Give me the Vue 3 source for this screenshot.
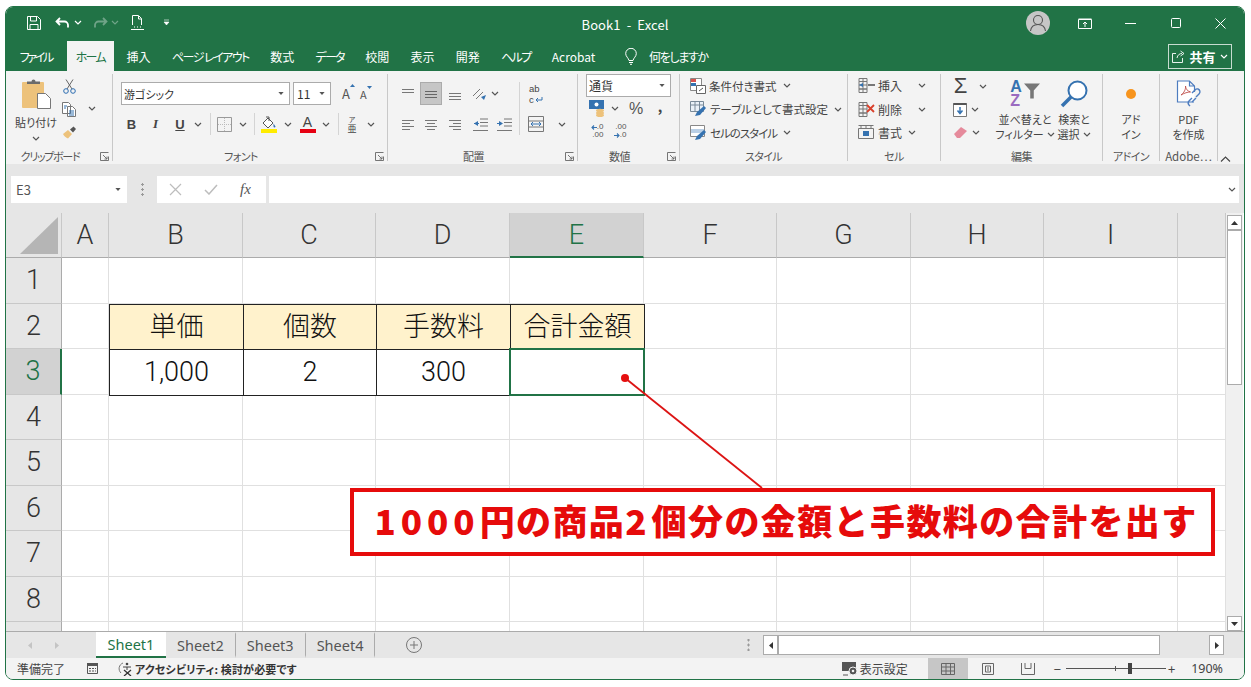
<template>
  <div class="window">
    <!-- shared small glyphs -->
    <svg class="defs" width="0" height="0">
      <symbol id="chev" viewBox="0 0 8 5"><path d="M1 1l3 3 3-3" fill="none" stroke="currentColor" stroke-width="1.2" /></symbol>
      <symbol id="launch" viewBox="0 0 9 9"><path d="M.5 8.500v-8h8M.5 8.500h8v-4M3 3l4 4M7 4.500V7H4.500" fill="none" stroke="#666" stroke-width=".9" /></symbol>
      <symbol id="tri" viewBox="0 0 7 4"><path d="M0 0h7L3.500 4z" fill="currentColor" /></symbol>
    </svg>

    <header class="titlebar">
      <div class="qat">
        <svg class="q1" width="14" height="14" viewBox="0 0 14 14"><path d="M.5.500h10l3 3v10H.5zM3.500 1v4h6V1M3 13.500V8.500h8v5" fill="none" stroke="#fff" /></svg>
        <svg class="q2" width="15" height="12" viewBox="0 0 15 12"><path d="M5 1L1.500 4.500 5 8M2 4.500h7.500a3.500 3.500 0 0 1 3.500 3.500v2.500" fill="none" stroke="#fff" stroke-width="1.800" /></svg>
        <svg class="chev-w" width="8" height="5"><use href="#chev" /></svg>
        <svg class="q3" width="15" height="12" viewBox="0 0 15 12"><path d="M10 1l3.500 3.500L10 8M13 4.500H5.500A3.500 3.500 0 0 0 2 8v2.500" fill="none" stroke="#6fa387" stroke-width="1.800" /></svg>
        <svg class="chev-d" width="8" height="5"><use href="#chev" /></svg>
        <svg class="q4" width="13" height="15" viewBox="0 0 13 15"><path d="M1.500 10V.5h6l3 3V10M7.500 1v3h3M0 14.500h13M3 12h1M6 12h1M9 12h1" fill="none" stroke="#fff" /></svg>
        <svg class="q5" width="7" height="7" viewBox="0 0 7 7"><path d="M1 1h5M1 3h5l-2.500 3z" fill="#fff" stroke="#fff" stroke-width=".6" /></svg>
      </div>
      <div class="doc-title">Book1&nbsp; -&nbsp; Excel</div>
      <div class="win-ctl">
        <svg class="avatar" width="24" height="24" viewBox="0 0 24 24"><circle cx="12" cy="12" r="12" fill="#c6c6c6" /><circle cx="12" cy="9" r="4.500" fill="none" stroke="#555" stroke-width="1.100" /><path d="M4.500 20c.5-4 3.500-6.500 7.500-6.500s7 2.500 7.500 6.500" fill="none" stroke="#555" stroke-width="1.100" /></svg>
        <span class="ctl first"><svg width="14" height="11" viewBox="0 0 14 11"><path d="M.5 1.500h13v9H.5zM.5 1h13M7 9V4M5 6l2-2 2 2" fill="none" stroke="#fff" /></svg></span>
        <span class="ctl"><svg width="11" height="1"><path d="M0 .5h11" stroke="#fff" /></svg></span>
        <span class="ctl"><svg width="10" height="10"><rect x=".5" y=".5" width="9" height="9" rx="1" fill="none" stroke="#fff" /></svg></span>
        <span class="ctl"><svg width="11" height="11"><path d="M.5.500l10 10M10.500.5l-10 10" stroke="#fff" /></svg></span>
      </div>
    </header>

    <nav class="tabs">
      <span
        v-for="t in tabs"
        :key="t"
        class="tab"
        :class="{ active: t === 'ホーム', kana: isKana(t) }"
      >{{ t }}</span>
      <svg class="bulb" width="12" height="17" viewBox="0 0 12 17"><path d="M4 12.500C3.500 10 .7 8.500.7 5.600a5.300 5.300 0 0 1 10.600 0c0 2.900-2.800 4.400-3.300 6.900zM4 14.500h4M5 16.300h2" fill="none" stroke="#fff" /></svg>
      <span class="tell">何をしますか</span>
      <span class="share">
        <svg width="13" height="13" viewBox="0 0 13 13"><path d="M4 3.500H.5v9h10V8M5 8c.5-3 2.500-4.500 5-4.500M8.500 1L12 3.500 8.500 6" fill="none" stroke="#fff" stroke-width=".9" /></svg>
        <b>共有</b>
        <svg class="chev-w" width="8" height="5"><use href="#chev" /></svg>
      </span>
    </nav>

    <section class="ribbon">
      <!-- クリップボード -->
      <div class="group g-clip">
        <div class="body">
          <div class="paste">
            <svg width="29" height="30" viewBox="0 0 29 30">
              <rect x="0" y="3" width="22" height="26" rx="1" fill="#edc27b" />
              <path d="M5 5V2.500h4.500a2 2 0 0 1 4 0H18V5z" fill="#6b6b6b" />
              <path d="M15.500 14.500h8l5 5v10h-13z" fill="#fff" stroke="#777" />
            </svg>
            <span class="stack-txt">貼り付け</span>
            <svg class="chev" width="8" height="5"><use href="#chev" /></svg>
          </div>
          <div class="clip-tools">
            <svg width="13" height="15" viewBox="0 0 13 15"><path d="M3 .500l6 9.500M10 .5L4 10" stroke="#666" fill="none" /><circle cx="3" cy="12" r="2.300" fill="none" stroke="#2b6cb0" /><circle cx="10" cy="12" r="2.300" fill="none" stroke="#2b6cb0" /></svg>
            <svg width="14" height="15" viewBox="0 0 14 15"><path d="M.5.500h6l2 2v9h-8zM5.500 4.500h5l3 3v7h-8z" fill="#fff" stroke="#777" /><path d="M7 9h5M7 11h5M7 13h5M2 4h3M2 6h2" stroke="#3572b0" /></svg>
            <svg width="15" height="14" viewBox="0 0 15 14"><path d="M1 9l5-4 4 4-4 4.500C4 13 2 11 1 9z" fill="#edc27b" /><path d="M8 4.500l3.500-3 2.500 2.500-3 3.500z" fill="#555" /></svg>
          </div>
          <svg class="chev clip-chev" width="8" height="5"><use href="#chev" /></svg>
        </div>
        <div class="foot"><i /><span>クリップボード</span><svg width="9" height="9"><use href="#launch" /></svg></div>
      </div>

      <!-- フォント -->
      <div class="group g-font">
        <div class="body col">
          <div class="font-row1">
            <div class="combo c-font"><span>游ゴシック</span><svg width="6" height="3"><use href="#tri" /></svg></div>
            <div class="combo c-size"><span>11</span><svg width="6" height="3"><use href="#tri" /></svg></div>
            <span class="grow-a">A<svg width="5" height="3" viewBox="0 0 5 3"><path d="M0 3l2.500-3L5 3z" fill="#3572b0" /></svg></span>
            <span class="grow-a small">A<svg width="5" height="3" viewBox="0 0 5 3"><path d="M0 0l2.500 3L5 0z" fill="#3572b0" /></svg></span>
          </div>
          <div class="font-row2">
            <b class="fmt">B</b>
            <i class="fmt ital">I</i>
            <u class="fmt und">U</u>
            <svg class="chev" width="8" height="5"><use href="#chev" /></svg>
            <span class="sep" />
            <svg width="15" height="15" viewBox="0 0 15 15"><path d="M.5.500h14v14H.5z" fill="none" stroke="#999" /><path d="M7.500 1v13M1 7.500h13" stroke="#bbb" stroke-dasharray="1 1" /></svg>
            <svg class="chev" width="8" height="5"><use href="#chev" /></svg>
            <span class="sep" />
            <svg width="16" height="18" viewBox="0 0 16 18"><path d="M2 8l5-5 5 5-5 5z" fill="#fff" stroke="#555" /><path d="M5 2h3v4" fill="none" stroke="#555" /><path d="M12.500 8.500l2 3a1 1 0 1 1-2 0z" fill="#3572b0" /><rect y="14" width="16" height="4" fill="#ffec00" /></svg>
            <svg class="chev" width="8" height="5"><use href="#chev" /></svg>
            <span class="color-a">A</span>
            <svg class="chev" width="8" height="5"><use href="#chev" /></svg>
            <span class="sep" />
            <span class="phon"><small>ア</small><span>亜</span></span>
            <svg class="chev" width="8" height="5"><use href="#chev" /></svg>
          </div>
        </div>
        <div class="foot"><i /><span>フォント</span><svg width="9" height="9"><use href="#launch" /></svg></div>
      </div>

      <!-- 配置 -->
      <div class="group g-align">
        <div class="body">
          <div class="al-left">
            <div class="al-row1">
              <svg width="14" height="12" viewBox="0 0 14 12"><path d="M1 1.500h12M1 4.500h12" stroke="#777" /></svg>
              <span class="pressed"><svg width="14" height="12" viewBox="0 0 14 12"><path d="M1 3.500h12M1 6.500h12M1 9.500h12" stroke="#666" /></svg></span>
              <svg width="14" height="12" viewBox="0 0 14 12"><path d="M1 5.500h12M1 8.500h12M1 11.500h12" stroke="#777" /></svg>
              <svg width="15" height="16" viewBox="0 0 15 16"><path d="M1 10l7-7M4 13l7-7" stroke="#777" fill="none" /><path d="M9 11l5-2-2 5z" fill="#3572b0" /></svg>
              <svg class="chev" width="8" height="5"><use href="#chev" /></svg>
            </div>
            <div class="al-row2">
              <svg width="14" height="11" viewBox="0 0 14 11"><path d="M1 1.500h12M1 4.500h8M1 7.500h12M1 10.500h8" stroke="#777" /></svg>
              <svg width="14" height="11" viewBox="0 0 14 11"><path d="M1 1.500h12M3 4.500h8M1 7.500h12M3 10.500h8" stroke="#777" /></svg>
              <svg width="14" height="11" viewBox="0 0 14 11"><path d="M1 1.500h12M5 4.500h8M1 7.500h12M5 10.500h8" stroke="#777" /></svg>
              <svg width="15" height="13" viewBox="0 0 15 13"><path d="M7 1h8M7 4.500h8M7 8h8M0 12.500h15" stroke="#777" /><path d="M5 3L1 5.500 5 8z" fill="#3572b0" /><path d="M1 5.500h5" stroke="#3572b0" /></svg>
              <svg width="15" height="13" viewBox="0 0 15 13"><path d="M7 1h8M7 4.500h8M7 8h8M0 12.500h15" stroke="#777" /><path d="M2 3l4 2.500L2 8z" fill="#3572b0" /><path d="M0 5.500h3" stroke="#3572b0" /></svg>
            </div>
          </div>
          <div class="al-right">
            <div class="wrap-ab"><span>ab</span><span class="wrap-c">c<svg width="8" height="6" viewBox="0 0 8 6"><path d="M7 0v3H1M3 1L1 3l2 2" fill="none" stroke="#3572b0" /></svg></span></div>
            <div class="merge">
              <svg width="16" height="16" viewBox="0 0 16 16"><path d="M.5.500h15v15H.5zM.5 5h15M.5 11h15" fill="none" stroke="#777" /><path d="M3 8h10M5 6L3 8l2 2M11 6l2 2-2 2" fill="none" stroke="#3572b0" /></svg>
              <svg class="chev" width="8" height="5"><use href="#chev" /></svg>
            </div>
          </div>
        </div>
        <div class="foot"><i /><span>配置</span><svg width="9" height="9"><use href="#launch" /></svg></div>
      </div>

      <!-- 数値 -->
      <div class="group g-num">
        <div class="body col">
          <div class="combo c-num"><span>通貨</span><svg width="6" height="3"><use href="#tri" /></svg></div>
          <div class="num-row">
            <svg width="17" height="17" viewBox="0 0 17 17"><rect width="15" height="9" fill="#3572b0" /><circle cx="7.500" cy="4.500" r="2" fill="#fff" /><ellipse cx="11" cy="10.500" rx="4" ry="1.800" fill="#edc27b" /><ellipse cx="11" cy="13" rx="4" ry="1.800" fill="#edc27b" /><ellipse cx="11" cy="15.200" rx="4" ry="1.800" fill="#edc27b" /></svg>
            <svg class="chev" width="8" height="5"><use href="#chev" /></svg>
            <span class="pct">%</span>
            <b class="comma">,</b>
          </div>
          <div class="num-row3">
            <span class="dec">
              <span class="dec-line"><svg width="6" height="5" viewBox="0 0 6 5"><path d="M6 2.500H1M3 .5l-2 2 2 2" fill="none" stroke="#3572b0" stroke-width="1.100" /></svg>.0</span>
              <span class="dec-line">.00</span>
            </span>
            <span class="dec">
              <span class="dec-line">.00</span>
              <span class="dec-line"><svg width="6" height="5" viewBox="0 0 6 5"><path d="M0 2.500h5M3 .5l2 2-2 2" fill="none" stroke="#3572b0" stroke-width="1.100" /></svg>.0</span>
            </span>
          </div>
        </div>
        <div class="foot"><i /><span>数値</span><svg width="9" height="9"><use href="#launch" /></svg></div>
      </div>

      <!-- スタイル -->
      <div class="group g-style">
        <div class="body col">
          <div class="list-row">
            <svg width="16" height="16" viewBox="0 0 16 16"><path d="M.5.500h11v12H.5z" fill="#fff" stroke="#888" /><path d="M1 1h5v3H1z" fill="#d9534f" /><path d="M1 5h5v3H1z" fill="#3572b0" /><path d="M6.500 7.500h9v8h-9z" fill="#fff" stroke="#666" /><path d="M9 13l4-3" stroke="#555" /></svg>
            <span>条件付き書式</span><svg class="chev" width="8" height="5"><use href="#chev" /></svg>
          </div>
          <div class="list-row">
            <svg width="17" height="16" viewBox="0 0 17 16"><path d="M.5.500h13v10H.5zM.5 4h13M5 .500v10M9.500.5v10" fill="#eaf1f8" stroke="#7a8a99" /><path d="M5 15l2-4 7-6 2 2-6 7z" fill="#3572b0" /></svg>
            <span>テーブルとして書式設定</span><svg class="chev" width="8" height="5"><use href="#chev" /></svg>
          </div>
          <div class="list-row">
            <svg width="17" height="16" viewBox="0 0 17 16"><path d="M.5.500h14v11H.5z" fill="#fff" stroke="#888" /><path d="M1 4h13v4H1z" fill="#b9cfe6" /><path d="M5 15l2-4 7-6 2 2-6 7z" fill="#3572b0" /></svg>
            <span class="tight">セルのスタイル</span><svg class="chev" width="8" height="5"><use href="#chev" /></svg>
          </div>
        </div>
        <div class="foot center"><span>スタイル</span></div>
      </div>

      <!-- セル -->
      <div class="group g-cell">
        <div class="body col">
          <div class="list-row">
            <svg width="17" height="15" viewBox="0 0 17 15"><path d="M1 .500h8v3H1zM1 11h8v3.500H1zM1 3.500v7.500h8V3.500M5 .5v14M1 7h8" fill="none" stroke="#777" /><path d="M10 7h7" stroke="#777" stroke-width="2" /><path d="M5 5L1 7l4 2z" fill="#3572b0" /></svg>
            <span>挿入</span><svg class="chev far" width="8" height="5"><use href="#chev" /></svg>
          </div>
          <div class="list-row">
            <svg width="17" height="15" viewBox="0 0 17 15"><path d="M1 .500h8v3H1zM1 11h8v3.500H1zM1 3.500v7.500h8V3.500M5 .5v14M1 7h8" fill="none" stroke="#777" /><path d="M9 3l7 7M16 3l-7 7" stroke="#d9402b" stroke-width="1.800" /></svg>
            <span>削除</span><svg class="chev far" width="8" height="5"><use href="#chev" /></svg>
          </div>
          <div class="list-row">
            <svg width="17" height="16" viewBox="0 0 17 16"><path d="M.5.500h15M.5 3.500h15v10H.5z" fill="none" stroke="#777" /><rect x="5" y="6" width="6" height="5" fill="#3572b0" /><path d="M3 .5v3M8 .5v3M13 .5v3" stroke="#777" /></svg>
            <span>書式</span><svg class="chev" width="8" height="5"><use href="#chev" /></svg>
          </div>
        </div>
        <div class="foot center"><span>セル</span></div>
      </div>

      <!-- 編集 -->
      <div class="group g-edit">
        <div class="body">
          <div class="edit-left">
            <div class="edit-row"><span class="sigma">Σ</span><svg class="chev" width="8" height="5"><use href="#chev" /></svg></div>
            <div class="edit-row short">
              <svg width="14" height="14" viewBox="0 0 14 14"><path d="M.5.500h13v13H.5z" fill="#fff" stroke="#777" /><path d="M.5 1h13" stroke="#555" stroke-width="2" /><path d="M7 4v6M4.500 7.500L7 10.500l2.500-3" fill="none" stroke="#3572b0" stroke-width="1.500" /></svg>
              <svg class="chev" width="8" height="5"><use href="#chev" /></svg>
            </div>
            <div class="edit-row short">
              <svg width="15" height="13" viewBox="0 0 15 13"><path d="M1 8l7-7 6 4-7 7H4z" fill="#e58a9b" /></svg>
              <svg class="chev" width="8" height="5"><use href="#chev" /></svg>
            </div>
          </div>
          <div class="big b-sort">
            <span class="big-ic sort-ic">
              <span class="az"><em>A</em><em>Z</em></span>
              <svg width="16" height="16" viewBox="0 0 18 17"><path d="M0 0h18l-7 8v9H7V8z" fill="#777" /></svg>
            </span>
            <span class="stack-txt">並べ替えと</span>
            <span class="stack-txt">フィルター <svg class="chev" width="8" height="5"><use href="#chev" /></svg></span>
          </div>
          <div class="big b-find">
            <span class="big-ic">
              <svg width="28" height="28" viewBox="0 0 28 28"><circle cx="17.500" cy="10.500" r="9" fill="#fff" stroke="#3572b0" stroke-width="2" /><path d="M11 17L2 26" stroke="#3572b0" stroke-width="3.500" /></svg>
            </span>
            <span class="stack-txt">検索と</span>
            <span class="stack-txt">選択 <svg class="chev" width="8" height="5"><use href="#chev" /></svg></span>
          </div>
        </div>
        <div class="foot center"><span>編集</span></div>
      </div>

      <!-- アドイン -->
      <div class="group g-addin">
        <div class="big">
          <span class="big-ic"><span class="dot" /></span>
          <span class="stack-txt">アド</span>
          <span class="stack-txt">イン</span>
        </div>
        <div class="foot center"><span>アドイン</span></div>
      </div>

      <!-- Adobe -->
      <div class="group g-adobe">
        <div class="big">
          <span class="big-ic">
            <svg width="26" height="28" viewBox="0 0 26 28"><path d="M18 22H1.500V1h12l5 5v6M13.500 1v5h5" fill="#fff" stroke="#4d7cbf" stroke-width="1.200" /><path d="M5 15c3-2 5-6 4.500-9 0 3 2 5 5 6-3 0-6 1-9.500 3z" fill="none" stroke="#c0504d" stroke-width=".9" /><path d="M14 24l-1-1a3 3 0 0 1 0-4l3-3M20 15l3-3a3 3 0 0 0-1-5 3 3 0 0 0-3 1l-3 3M16 20l4-4" transform="translate(0 2)" fill="none" stroke="#4d7cbf" stroke-width="1.400" /></svg>
          </span>
          <span class="stack-txt">PDF</span>
          <span class="stack-txt">を作成</span>
        </div>
        <div class="foot center"><span>Adobe⋯</span></div>
      </div>

      <div class="collapse">
        <svg width="11" height="6" viewBox="0 0 11 6"><path d="M1 5.500l4.500-4.500 4.500 4.500" fill="none" stroke="#444" stroke-width="1.100" /></svg>
      </div>
    </section>

    <section class="formula">
      <div class="name-box"><span>E3</span><svg width="6" height="3"><use href="#tri" /></svg></div>
      <span class="grip" />
      <div class="fx-box">
        <svg width="13" height="13" viewBox="0 0 13 13"><path d="M1 1l11 11M12 1L1 12" stroke="#bdbdbd" stroke-width="1.200" /></svg>
        <svg width="14" height="11" viewBox="0 0 14 11"><path d="M1 6l4 4 8-9" fill="none" stroke="#bdbdbd" stroke-width="1.500" /></svg>
        <span class="fx">fx</span>
      </div>
      <div class="formula-input"><svg class="chev" width="8" height="5"><use href="#chev" /></svg></div>
    </section>

    <section class="sheet">
      <div class="grid">
        <div class="corner">
          <svg width="38" height="37" viewBox="0 0 38 37"><path d="M38 0v37H0z" fill="#b5b5b5" /></svg>
        </div>
        <div v-for="c in columns" :key="c" class="col-head" :class="{ on: c === 'E' }">{{ c === 'J' ? '' : c }}</div>
        <template v-for="r in rows" :key="r">
          <div class="row-head" :class="{ on: r === 3 }">{{ r === 9 ? '' : r }}</div>
          <div
            v-for="c in columns"
            :key="c + r"
            class="cell"
            :class="cellClass(c, r)"
          >{{ values[c + r] }}</div>
        </template>
      </div>
      <div class="vscroll">
        <span class="sb-btn"><svg width="7" height="4" class="up"><use href="#tri" /></svg></span>
        <span class="sb-thumb" />
        <span class="sb-rest" />
        <span class="sb-btn"><svg width="7" height="4"><use href="#tri" /></svg></span>
      </div>

      <!-- 吹き出し -->
      <svg class="pointer" width="150" height="120" viewBox="0 0 150 120">
        <circle cx="5" cy="5" r="4" fill="#e60f0f" />
        <path d="M5 5l137 110" stroke="#dc1414" stroke-width="1.800" />
      </svg>
      <div class="callout"><span class="num">1000</span>円の商品<span class="num">2</span>個分の金額と手数料の合計を出す</div>
    </section>

    <section class="sheet-tabs">
      <div class="nav-arrows">
        <svg width="4" height="7" viewBox="0 0 4 7"><path d="M4 0v7L0 3.500z" fill="#c4c4c4" /></svg>
        <svg width="4" height="7" viewBox="0 0 4 7"><path d="M0 0v7l4-3.500z" fill="#c4c4c4" /></svg>
      </div>
      <span v-for="s in sheets" :key="s" class="s-tab" :class="{ active: s === 'Sheet1' }">{{ s }}</span>
      <svg class="plus" width="16" height="16" viewBox="0 0 16 16"><circle cx="8" cy="8" r="7.500" fill="none" stroke="#777" /><path d="M8 4v8M4 8h8" stroke="#777" /></svg>
      <span class="grip tabs-grip" />
      <div class="hscroll">
        <span class="sb-btn h"><svg width="4" height="7" viewBox="0 0 4 7"><path d="M4 0v7L0 3.500z" fill="#333" /></svg></span>
        <span class="h-thumb" />
        <span class="h-rest" />
        <span class="sb-btn h"><svg width="4" height="7" viewBox="0 0 4 7"><path d="M0 0v7l4-3.500z" fill="#333" /></svg></span>
      </div>
    </section>

    <footer class="status">
      <span class="ready">準備完了</span>
      <svg class="macro" width="11" height="11" viewBox="0 0 11 11"><path d="M.5 2.500h10v8H.5z" fill="none" stroke="#555" /><path d="M0 0h11v3H0zM2 5h2v1H2zM5 5h2v1H5zM8 5h1v1H8zM2 7.500h2v1H2zM5 7.500h2v1H5zM8 7.500h1v1H8z" fill="#555" /></svg>
      <svg class="acc" width="15" height="14" viewBox="0 0 15 14"><path d="M5 1a6 6 0 0 0-2 10" fill="none" stroke="#777" /><circle cx="9" cy="2" r="1.300" fill="#444" /><path d="M5 5h8M9 5v3" stroke="#444" /><path d="M6 8l7 6M13 8l-7 6" stroke="#333" stroke-width="1.300" /></svg>
      <b class="acc-txt">アクセシビリティ: 検討が必要です</b>
      <span class="st-right">
        <svg width="17" height="14" viewBox="0 0 17 14"><path d="M0 0h14v9H0z" fill="#555" /><circle cx="11" cy="9" r="4" fill="#555" stroke="#f3f3f3" /><circle cx="11" cy="9" r="1.300" fill="#f3f3f3" /><path d="M1 13h5" stroke="#555" /></svg>
        <span class="disp">表示設定</span>
        <span class="view on"><svg width="14" height="12" viewBox="0 0 14 12"><path d="M.5.500h13v11H.5zM.5 4h13M.5 8h13M5 .5v11M9.500.5v11" fill="none" stroke="#666" /></svg></span>
        <span class="view"><svg width="12" height="12" viewBox="0 0 12 12"><path d="M.5.500h11v11H.5zM3.500 3h5v6h-5zM5 5h2M5 7h2" fill="none" stroke="#666" /></svg></span>
        <span class="view"><svg width="14" height="12" viewBox="0 0 14 12"><path d="M.5 0v11.500h13V0M4 0v5.500h6V0" fill="none" stroke="#666" /></svg></span>
        <span class="zoom-m">−</span>
        <span class="slider"><i class="tick" /><i class="knob" /></span>
        <span class="zoom-p">+</span>
        <span class="pct-z">190%</span>
      </span>
    </footer>
  </div>
</template>

<script setup>
const tabs = ['ファイル', 'ホーム', '挿入', 'ページ レイアウト', '数式', 'データ', '校閲', '表示', '開発', 'ヘルプ', 'Acrobat']
const columns = ['A', 'B', 'C', 'D', 'E', 'F', 'G', 'H', 'I', 'J']
const rows = [1, 2, 3, 4, 5, 6, 7, 8, 9]
const sheets = ['Sheet1', 'Sheet2', 'Sheet3', 'Sheet4']

const values = {
  B2: '単価',
  C2: '個数',
  D2: '手数料',
  E2: '合計金額',
  B3: '1,000',
  C3: '2',
  D3: '300',
}

// カタカナのタブは字詰めを強くする
const isKana = (t) => /[ァ-ヶ]/.test(t)

const cellClass = (c, r) => {
  if (c === 'E' && r === 3) return 'selected'
  if (r === 2 && 'BCDE'.includes(c)) return 'boxed head'
  if (r === 3 && 'BCD'.includes(c)) return 'boxed'
  return ''
}
</script>

<style>
body {
  background: #fff;
}
</style>

<style scoped>
.window {
  box-sizing: border-box;
  width: 1240px;
  height: 674px;
  margin: 6px 0 0 5px;
  border: 1px solid #217346;
  border-radius: 8px;
  overflow: hidden;
  background: #f3f3f3;
  font-family: "Noto Sans CJK JP", "Noto Sans", sans-serif;
  font-feature-settings: "palt";
  color: #333;
}
.defs {
  position: absolute;
}
svg {
  display: block;
  flex: none;
}
.chev {
  color: #555;
}
.chev-w {
  color: #fff;
}
.chev-d {
  color: #6fa387;
}

/* title bar */
.titlebar {
  height: 34px;
  background: #217346;
  display: grid;
  grid-template-columns: 1fr auto 1fr;
  align-items: center;
  color: #fff;
}
.qat {
  display: flex;
  align-items: center;
  padding-left: 21px;
  padding-bottom: 3px;
}
.q2 { margin-left: 14px; }
.qat .chev-w { margin-left: 4px; }
.q3 { margin-left: 11px; }
.qat .chev-d { margin-left: 3px; }
.q4 { margin-left: 12px; }
.q5 { margin-left: 19px; }
.doc-title {
  font-size: 13px;
  letter-spacing: .1px;
}
.win-ctl {
  display: flex;
  justify-content: flex-end;
  align-items: center;
  padding-bottom: 2px;
  padding-right: 1px;
}
.ctl {
  width: 45px;
  display: flex;
  justify-content: center;
}
.ctl.first { margin-left: 12px; width: 46px; }

/* ribbon tabs */
.tabs {
  height: 30px;
  background: #217346;
  display: flex;
  align-items: stretch;
  padding-left: 3px;
  color: #fff;
  font-size: 12px;
}
.tab {
  padding: 0 10.650px;
  display: flex;
  align-items: center;
  white-space: nowrap;
}
.tab.kana {
  letter-spacing: -1.700px;
}
.tab:first-child {
  letter-spacing: -2.300px;
}
.tab:nth-child(4) {
  letter-spacing: -1.500px;
}
.tab.active {
  background: #f3f3f3;
  color: #217346;
  padding: 0 9px;
  margin: 0 2px 0 4px;
}
.bulb {
  align-self: center;
  margin-left: 19px;
}
.tell {
  display: flex;
  align-items: center;
  margin-left: 12px;
  letter-spacing: -1.300px;
}
.share {
  margin-left: auto;
  margin-right: 12px;
  align-self: center;
  box-sizing: border-box;
  width: 64px;
  height: 25px;
  border: 1px solid #c8dcd0;
  display: flex;
  align-items: center;
  justify-content: center;
  gap: 4px;
  font-size: 13px;
}

/* ribbon */
.ribbon {
  height: 93px;
  box-sizing: border-box;
  padding-top: 3px;
  display: flex;
  align-items: flex-start;
  font-size: 12px;
  color: #444;
}
.group {
  box-sizing: border-box;
  height: 87px;
  border-right: 1px solid #c8c8c8;
  display: flex;
  flex-direction: column;
}
.body {
  flex: 1;
  display: flex;
  min-height: 0;
}
.body.col {
  flex-direction: column;
}
.foot {
  height: 13px;
  margin-bottom: -2px;
  display: grid;
  grid-template-columns: 1fr auto 1fr 18px;
  align-items: center;
  font-size: 11px;
  color: #555;
  line-height: 13px;
  white-space: nowrap;
  letter-spacing: -.600px;
}
.foot svg {
  grid-column: 4;
  justify-self: end;
  margin-right: 3px;
}
.foot.center {
  display: flex;
  justify-content: center;
}
.g-clip .foot { letter-spacing: -1.300px; }
.g-font .foot,
.g-align .foot,
.g-num .foot {
  margin-left: -8px;
}
.g-style .foot,
.g-cell .foot {
  margin-left: -10px;
}
.g-edit .foot {
  margin-left: -12px;
}
.g-adobe .foot {
  letter-spacing: 0;
  font-size: 11.500px;
}
.stack-txt {
  font-size: 11px;
  line-height: 15px;
  white-space: nowrap;
  display: flex;
  align-items: center;
  gap: 3px;
  color: #444;
}
.sep {
  width: 1px;
  height: 22px;
  background: #d4d4d4;
  justify-self: center;
}

/* clipboard */
.g-clip { width: 107px; }
.paste {
  width: 60px;
  display: flex;
  flex-direction: column;
  align-items: center;
  padding-top: 5px;
}
.paste .stack-txt { margin-top: 6px; }
.paste .chev { margin-top: 6px; }
.clip-tools {
  padding-top: 5px;
  display: flex;
  flex-direction: column;
  align-items: center;
  gap: 8px;
  width: 16px;
  margin-left: -5px;
}
.clip-chev { margin: 32px 0 0 11px; }

/* font */
.g-font {
  width: 275px;
  padding-left: 8px;
}
.font-row1 {
  display: flex;
  align-items: center;
  gap: 3px;
  margin-top: 8px;
}
.combo {
  box-sizing: border-box;
  height: 23px;
  background: #fff;
  border: 1px solid #ababab;
  display: flex;
  align-items: center;
  justify-content: space-between;
  padding: 0 5px 0 2px;
  font-size: 11px;
  color: #333;
}
.combo svg { color: #555; }
.c-font { width: 169px; }
.c-size { width: 38px; padding-left: 3px; font-size: 12px; }
.grow-a {
  display: flex;
  align-items: flex-start;
  font-size: 13px;
  color: #555;
  margin-left: 8px;
  width: 14px;
}
.grow-a.small { font-size: 11px; margin-left: 1px; }
.font-row2 {
  margin-top: 8px;
  height: 22px;
  display: grid;
  grid-template-columns: 21px 27px 22px 14px 10px 18px 20px 2px 28px 10px 29px 8px 16px 12px 26px;
  align-items: center;
  justify-items: center;
}
.fmt {
  font-family: "Liberation Sans", sans-serif;
  font-size: 13px;
  color: #444;
}
.ital { font-family: "Liberation Serif", serif; font-weight: 700; }
.und { font-weight: 700; }
.color-a {
  font-family: "Liberation Sans", sans-serif;
  font-size: 14px;
  line-height: 14px;
  border-bottom: 4px solid #e60012;
  width: 16px;
  text-align: center;
  color: #444;
}
.phon {
  font-size: 9px;
  line-height: 11px;
  display: flex;
  flex-direction: column;
  align-items: center;
}
.phon small { font-size: 7px; line-height: 8px; }

/* alignment */
.g-align { width: 190px; padding-left: 8px; }
.al-left {
  width: 123px;
  border-right: 1px solid #d4d4d4;
  height: 53px;
  margin-top: 8px;
}
.al-row1 {
  display: grid;
  grid-template-columns: 24px 22px 26px 22px 10px;
  justify-items: center;
  align-items: center;
  height: 23px;
}
.pressed {
  width: 22px;
  height: 23px;
  background: #c6c6c6;
  border: 1px solid #ababab;
  box-sizing: border-box;
  display: flex;
  align-items: center;
  justify-content: center;
}
.al-row2 {
  margin-top: 8px;
  display: grid;
  grid-template-columns: 24px 22px 26px 24px 24px;
  justify-items: center;
  align-items: center;
  height: 22px;
}
.al-right {
  flex: 1;
  margin-top: 8px;
  padding-left: 8px;
}
.wrap-ab {
  display: flex;
  flex-direction: column;
  font-family: "Liberation Sans", sans-serif;
  font-size: 9.500px;
  line-height: 11px;
  height: 23px;
  padding-top: 1px;
  padding-left: 1px;
  box-sizing: border-box;
  color: #444;
}
.wrap-c {
  display: flex;
  align-items: center;
  gap: 1px;
}
.merge {
  margin-top: 11px;
  display: flex;
  align-items: center;
  gap: 14px;
}

/* number */
.g-num { width: 102px; padding-left: 8px; }
.c-num { width: 85px; font-size: 12px; }
.num-row {
  display: grid;
  grid-template-columns: 22px 14px 28px 20px;
  justify-items: center;
  align-items: center;
  height: 21px;
  margin-top: 1px;
}
.pct { font-size: 16px; line-height: 18px; color: #555; font-family: "Liberation Sans", sans-serif; }
.comma { font-size: 14px; line-height: 14px; margin-top: -5px; color: #444; }
.num-row3 {
  display: grid;
  grid-template-columns: 22px 24px;
  justify-items: center;
  margin-top: 4px;
}
.dec {
  font-family: "Liberation Sans", sans-serif;
  font-size: 8px;
  line-height: 8px;
  color: #555;
  white-space: nowrap;
  display: flex;
  flex-direction: column;
  align-items: flex-end;
}
.dec-line {
  display: flex;
  align-items: center;
}

/* list rows (styles, cells) */
.g-style { width: 168px; padding-left: 10px; }
.g-cell { width: 93px; padding-left: 10px; }
.list-row {
  height: 23.500px;
  display: flex;
  align-items: center;
  gap: 3px;
  white-space: nowrap;
}
.list-row svg.chev { margin-left: 3px; }
.list-row svg.far { margin-left: 13px; }
.g-style .list-row { font-size: 11.500px; }
.tight { letter-spacing: -1px; }

/* editing */
.g-edit { width: 162px; padding-left: 12px; }
.edit-left {
  width: 41px;
  flex: none;
}
.edit-row {
  height: 24px;
  display: flex;
  align-items: center;
  gap: 11px;
}
.edit-row.short { gap: 4px; height: 23px; }
.sigma {
  font-family: "Liberation Sans", sans-serif;
  font-size: 22px;
  width: 15px;
  text-align: center;
  color: #444;
}
.big {
  display: flex;
  flex-direction: column;
  align-items: center;
  padding-top: 6px;
  flex: 1;
  min-height: 0;
}
.big-ic {
  height: 28px;
  margin-bottom: 4px;
  display: flex;
  align-items: center;
  justify-content: center;
}
.b-sort { width: 62px; flex: none; }
.b-find { width: 40px; flex: none; margin-left: -2px; }
.sort-ic { gap: 2px; }
.az {
  display: flex;
  flex-direction: column;
  font-family: "Liberation Sans", sans-serif;
  font-size: 16px;
  font-weight: 700;
  line-height: 14px;
}
.az em { font-style: normal; color: #3572b0; }
.az em + em { color: #9a6bc0; }
.sort-ic svg { margin-top: -7px; }
.dot {
  width: 10px;
  height: 10px;
  border-radius: 50%;
  background: #f7941d;
}
.g-addin { width: 57px; }
.g-adobe { width: 58px; }
.collapse {
  flex: 1;
  height: 89px;
  display: flex;
  align-items: flex-end;
  justify-content: center;
  padding-right: 12px;
  padding-bottom: 1px;
  box-sizing: border-box;
}

/* formula bar */
.formula {
  height: 49px;
  box-sizing: border-box;
  background: #e6e6e6;
  padding: 12px 5px 10px;
  display: flex;
  align-items: stretch;
}
.name-box {
  width: 116px;
  background: #fff;
  display: flex;
  align-items: center;
  justify-content: space-between;
  padding: 0 6px 0 5px;
  box-sizing: border-box;
  font-size: 13px;
  color: #555;
}
.name-box svg { color: #555; }
.grip {
  width: 30px;
  flex: none;
  background: radial-gradient(circle, #999 1px, transparent 1.200px);
  background-size: 3px 5px;
  background-repeat: repeat-y;
  background-position: center;
  margin: 7px 0;
}
.fx-box {
  width: 109px;
  background: #fff;
  display: flex;
  align-items: center;
  padding-left: 12px;
  gap: 22px;
  box-sizing: border-box;
}
.fx {
  font-family: "Liberation Serif", serif;
  font-style: italic;
  font-size: 15px;
  color: #555;
}
.formula-input {
  flex: 1;
  margin-left: 3px;
  background: #fff;
  display: flex;
  align-items: center;
  justify-content: flex-end;
  padding-right: 3px;
}

/* sheet */
.sheet {
  height: 419px;
  position: relative;
  display: flex;
  background: #fff;
  border-bottom: 1px solid #ababab;
  box-sizing: border-box;
  overflow: hidden;
}
.grid {
  width: 1220px;
  flex: none;
  display: grid;
  grid-template-columns: 56px 47px 134px 133px 134px 134px 133px 134px 133px 134px 48px;
  grid-template-rows: 45px;
  grid-auto-rows: 45.500px;
  font-family: "Roboto", "Noto Sans CJK JP", sans-serif;
  font-weight: 300;
  font-size: 27px;
}
.corner {
  background: #e6e6e6;
  border-right: 1px solid #c8c8c8;
  border-bottom: 1px solid #ababab;
  display: flex;
  align-items: flex-end;
  justify-content: flex-end;
  padding: 0 3px 3px 0;
}
.col-head,
.row-head {
  background: #e6e6e6;
  box-sizing: border-box;
  border-right: 1px solid #c8c8c8;
  border-bottom: 1px solid #ababab;
  display: flex;
  align-items: center;
  justify-content: center;
  color: #333;
}
.row-head {
  border-bottom-color: #c8c8c8;
  border-right-color: #ababab;
}
.col-head.on {
  background: #d2d2d2;
  color: #217346;
  border-bottom: 2px solid #217346;
}
.row-head.on {
  background: #d2d2d2;
  color: #217346;
  border-right: 2px solid #217346;
}
.cell {
  box-sizing: border-box;
  border-right: 1px solid #e0e0e0;
  border-bottom: 1px solid #e0e0e0;
  display: flex;
  align-items: center;
  justify-content: center;
  color: #111;
}
.cell.boxed {
  outline: 1px solid #222;
  outline-offset: -1px;
  z-index: 1;
  border: none;
  margin: 0 -1px -1px 0;
}
.cell.head {
  background: #fff2cc;
  padding-bottom: 4px;
}
.cell.selected {
  outline: 2px solid #217346;
  outline-offset: -1px;
  z-index: 2;
  border: none;
}
.vscroll {
  width: 17px;
  background: #f0f0f0;
  display: flex;
  flex-direction: column;
  align-items: center;
  padding-top: 2px;
  box-sizing: border-box;
  height: 100%;
}
.sb-btn {
  box-sizing: border-box;
  width: 15px;
  height: 15px;
  flex: none;
  background: #fff;
  border: 1px solid #ababab;
  display: flex;
  align-items: center;
  justify-content: center;
  color: #333;
}
.sb-btn .up { transform: rotate(180deg); }
.sb-thumb {
  width: 15px;
  height: 155px;
  background: #fff;
  border: 1px solid #ababab;
  box-sizing: border-box;
  flex: none;
}
.sb-rest { flex: 1; }

.callout {
  position: absolute;
  left: 344px;
  top: 275px;
  box-sizing: border-box;
  width: 865px;
  height: 68px;
  border: 4px solid #e60b0b;
  background: #fff;
  display: flex;
  align-items: center;
  justify-content: center;
  padding: 0 0 5px 7px;
  z-index: 4;
  color: #e60b0b;
  font-size: 35px;
  font-weight: 900;
  letter-spacing: 1.400px;
  font-feature-settings: normal;
  white-space: pre;
}
.callout .num {
  letter-spacing: 5px;
}
.pointer {
  position: absolute;
  left: 614px;
  top: 160px;
  z-index: 3;
}

/* sheet tabs */
.sheet-tabs {
  height: 26px;
  background: #e6e6e6;
  display: flex;
  align-items: stretch;
  font-family: "Noto Sans", sans-serif;
  font-size: 14.500px;
  color: #555;
}
.nav-arrows {
  width: 90px;
  display: flex;
  align-items: center;
  padding-left: 22px;
  gap: 23px;
  box-sizing: border-box;
}
.s-tab {
  display: flex;
  align-items: center;
  padding: 0 11px;
  height: 100%;
  box-sizing: border-box;
  border-right: 1px solid #ababab;
  background-clip: padding-box;
  border-top: 2px solid transparent;
  border-bottom: 3px solid #e6e6e6;
}
.s-tab.active {
  background: #fff;
  color: #217346;
  border-right: none;
  border-top: none;
  border-bottom: 2px solid #217346;
  width: 70px;
  justify-content: center;
  padding: 0;
}
.plus {
  align-self: center;
  margin-left: 31px;
}
.tabs-grip {
  margin: 7px 0 7px auto;
}
.hscroll {
  width: 461px;
  margin: 3px 20px 3px 0;
  display: flex;
  align-items: stretch;
}
.sb-btn.h { height: auto; }
.h-thumb {
  width: 382px;
  background: #fff;
  border: 1px solid #ababab;
  box-sizing: border-box;
}
.h-rest { flex: 1; }

/* status */
.status {
  height: 21px;
  background: #f3f3f3;
  display: flex;
  align-items: center;
  padding-left: 11px;
  font-size: 12px;
  color: #444;
}
.ready { width: 69px; }
.macro { margin-left: 1px; }
.acc { margin-left: 20px; }
.acc-txt {
  font-size: 11px;
  margin-left: 2px;
  letter-spacing: .15px;
  color: #333;
}
.st-right {
  margin-left: auto;
  display: flex;
  align-items: center;
  height: 100%;
  padding-right: 21px;
}
.disp { margin-left: 1px; margin-right: 20px; }
.view {
  width: 40px;
  height: 100%;
  display: flex;
  align-items: center;
  justify-content: center;
}
.view.on { background: #c6c6c6; }
.zoom-m { margin-left: 6px; font-size: 13px; }
.slider {
  width: 100px;
  height: 1px;
  background: #555;
  margin: 0 2px 0 5px;
  position: relative;
}
.tick {
  position: absolute;
  left: 49px;
  top: -2px;
  width: 1px;
  height: 5px;
  background: #555;
}
.knob {
  position: absolute;
  left: 62px;
  top: -5px;
  width: 4px;
  height: 11px;
  background: #444;
}
.zoom-p { font-size: 13px; }
.pct-z {
  margin-left: 16px;
  font-family: "Noto Sans", sans-serif;
  font-size: 12.500px;
}
</style>
